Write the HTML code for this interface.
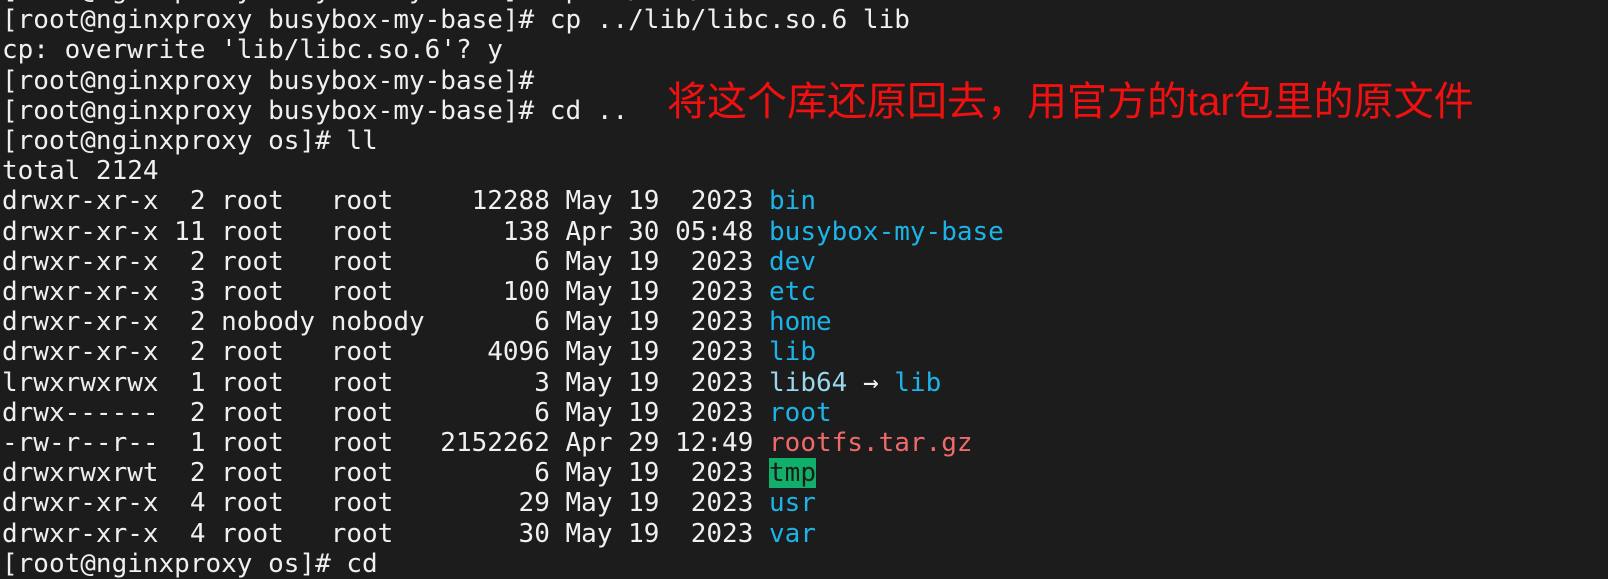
<!DOCTYPE html>
<html><head><meta charset="utf-8"><style>
html,body{margin:0;padding:0;background:#1c1c1c;width:1608px;height:571px;overflow:hidden}
pre{margin:0;position:absolute;left:2px;top:-25px;font-family:"DejaVu Sans Mono","Liberation Mono",monospace;font-size:26px;line-height:30.2px;color:#f0f0f0}
.c{color:#1cb4e8}.l{color:#9ad6ee}.r{color:#f06a6a}.g{background:#10b06a;color:#1c1c1c}
.note{position:absolute;left:667px;top:79px;font-family:"Liberation Sans","Noto Sans CJK SC",sans-serif;font-size:40px;line-height:46px;color:#f01010;white-space:nowrap}
</style></head><body>
<pre>[root@nginxproxy busybox-my-base]# cp ../lib/libc.so.6 lib
[root@nginxproxy busybox-my-base]# cp ../lib/libc.so.6 lib
cp: overwrite 'lib/libc.so.6'? y
[root@nginxproxy busybox-my-base]#
[root@nginxproxy busybox-my-base]# cd ..
[root@nginxproxy os]# ll
total 2124
drwxr-xr-x  2 root   root     12288 May 19  2023 <span class="c">bin</span>
drwxr-xr-x 11 root   root       138 Apr 30 05:48 <span class="c">busybox-my-base</span>
drwxr-xr-x  2 root   root         6 May 19  2023 <span class="c">dev</span>
drwxr-xr-x  3 root   root       100 May 19  2023 <span class="c">etc</span>
drwxr-xr-x  2 nobody nobody       6 May 19  2023 <span class="c">home</span>
drwxr-xr-x  2 root   root      4096 May 19  2023 <span class="c">lib</span>
lrwxrwxrwx  1 root   root         3 May 19  2023 <span class="l">lib64</span> → <span class="c">lib</span>
drwx------  2 root   root         6 May 19  2023 <span class="c">root</span>
-rw-r--r--  1 root   root   2152262 Apr 29 12:49 <span class="r">rootfs.tar.gz</span>
drwxrwxrwt  2 root   root         6 May 19  2023 <span class="g">tmp</span>
drwxr-xr-x  4 root   root        29 May 19  2023 <span class="c">usr</span>
drwxr-xr-x  4 root   root        30 May 19  2023 <span class="c">var</span>
[root@nginxproxy os]# cd</pre>
<div class="note">将这个库还原回去，用官方的tar包里的原文件</div>
</body></html>
